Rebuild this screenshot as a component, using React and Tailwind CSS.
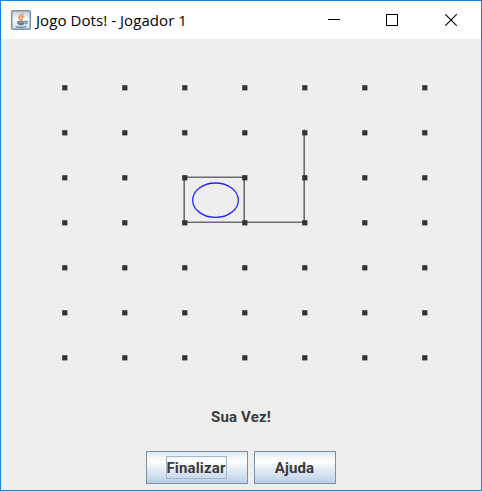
const columns = [65, 125, 185, 245, 305, 365, 425];
const rows = [49, 94, 139, 184, 229, 274, 319];

function JavaIcon() {
  return (
    <svg width="20" height="20" viewBox="0 0 20 20" fill="none">
      <defs>
        <linearGradient id="tile" x1="0" y1="0" x2="0" y2="1">
          <stop offset="0" stopColor="#bccad6" />
          <stop offset=".45" stopColor="#fafafa" />
          <stop offset="1" stopColor="#d3dbe3" />
        </linearGradient>
      </defs>
      <rect x=".75" y=".75" width="18.5" height="18.5" rx="1" fill="url(#tile)" stroke="#7893a9" strokeWidth="1.5" />
      <path d="M12 3C12 5 8 5.500 8 8c0 1.500 1.500 2 1.500 3.500M13 6c-2 1-3 2-2 3.500.5 1-.2 1.500-.7 2" stroke="#e9954f" strokeWidth="1.700" />
      <path d="M6 11.800h8M6.500 13.300h7M7.500 14.600h5M14 11.500c3-1 3 2 0 2.500M4.500 16.500c3 1 8 1 11 0" stroke="#54799b" strokeWidth="1.200" />
    </svg>
  );
}

function TitleBar() {
  return (
    <header className="flex h-[38px] shrink-0 items-center bg-white pl-2.5">
      <JavaIcon />
      <h1 className="ml-[5px] flex-1 whitespace-nowrap font-['Open_Sans','Noto_Sans',sans-serif] text-[15px] leading-5 font-normal tracking-[0.07px] text-black">
        Jogo Dots! - Jogador 1
      </h1>
      <div className="flex text-black">
        <button aria-label="Minimizar" className="flex h-[38px] w-[58px] items-center justify-center">
          <svg width="12" height="12" shapeRendering="crispEdges"><path d="M0 5.500h12" stroke="currentColor" /></svg>
        </button>
        <button aria-label="Maximizar" className="flex h-[38px] w-[58px] items-center justify-center">
          <svg width="12" height="12"><path d="M.5.5h11v11H.5z" fill="none" stroke="currentColor" /></svg>
        </button>
        <button aria-label="Fechar" className="flex h-[38px] w-[60px] items-center justify-center">
          <svg width="12" height="12"><path d="M.3.3l11.400 11.400M11.700.3L.3 11.700" stroke="currentColor" strokeWidth="1.100" /></svg>
        </button>
      </div>
    </header>
  );
}

function Board() {
  return (
    <svg className="-ml-px block shrink-0" width="481" height="352">
      <g stroke="#6c6c6c" strokeWidth="1.600" fill="none">
        <path d="M182 138.200H245M184.200 136V183.500M244.200 136V183.500M182 183.200H305M304.200 90.500V183.500" />
      </g>
      <ellipse cx="215.500" cy="161.200" rx="22.800" ry="17.200" fill="none" stroke="#2424ff" strokeWidth="1.300" />
      {rows.map((y) =>
        columns.map((x) => (
          <rect key={`${x}-${y}`} x={x - 2.8} y={y - 2.8} width="5.200" height="5.200" fill="#333333" />
        )),
      )}
    </svg>
  );
}

const buttonStyle =
  "flex h-[33px] items-center justify-center border-[1.500px] border-[#7e8f9f] bg-linear-to-b from-[#dde8f3] via-white via-30% to-[#b8cfe5]";

export default function App() {
  return (
    <main className="flex h-[491px] w-[482px] flex-col overflow-hidden border border-[#1883d7] bg-[#eeeeee] font-['Roboto','Liberation_Sans',sans-serif] text-[15px] font-bold text-[#3a3a3a]">
      <TitleBar />
      <Board />
      <p className="mt-4 h-5 text-center text-[15px] leading-5 tracking-[0.15px]">Sua Vez!</p>
      <div className="mt-6 flex justify-center gap-1.5">
        <button className={`${buttonStyle} w-[102px] pr-0.5`}>
          <span className="flex h-[23px] w-[61px] items-center justify-center border border-[#a3b8cc] pt-0.5 leading-none tracking-[0.15px]">Finalizar</span>
        </button>
        <button className={`${buttonStyle} w-[82px] pt-0.5 pr-px tracking-[0.15px]`}>Ajuda</button>
      </div>
    </main>
  );
}
